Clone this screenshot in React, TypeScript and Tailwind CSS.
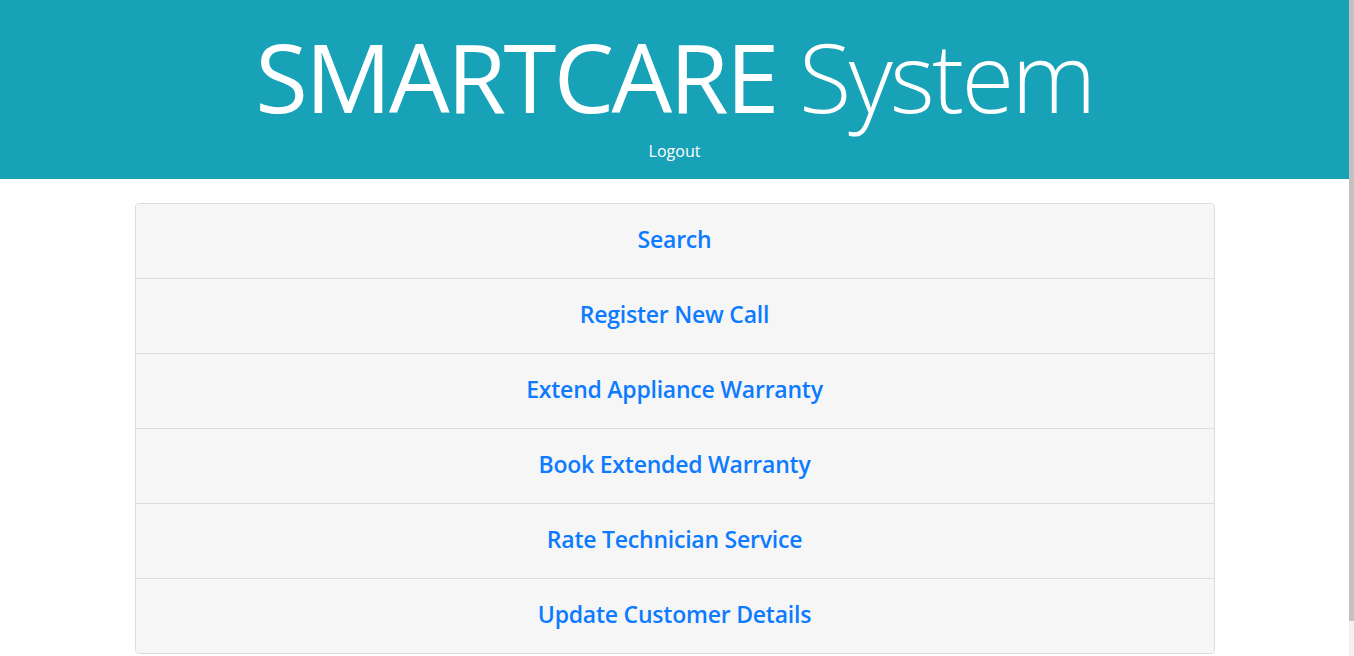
import React from "react";

const links = [
  "Search",
  "Register New Call",
  "Extend Appliance Warranty",
  "Book Extended Warranty",
  "Rate Technician Service",
  "Update Customer Details",
];

const App = () => {
  return (
    <div className="min-h-[656px] bg-white mr-[5px] font-['Open_Sans','Noto_Sans',sans-serif]">
      <header className="bg-[#17a2b8] text-white text-center pt-[18px] pb-[16px]">
        <h1 className="text-[96px] leading-[1.2] tracking-[-0.028em]">
          <span className="font-normal">SMARTCARE</span>{" "}
          <span className="font-light">System</span>
        </h1>
        <a href="#" className="block mt-[6px] text-[16px] leading-[24px] text-white">
          Logout
        </a>
      </header>

      <main className="w-[1080px] mx-auto mt-[24px]">
        <ul className="border border-[#dcdcdc] rounded-[4px] overflow-hidden">
          {links.map((label, i) => (
            <li
              key={label}
              className={
                "bg-[#f6f6f6] flex items-center justify-center pb-[4px] " +
                (i > 0 ? "h-[75px] border-t border-[#dcdcdc]" : "h-[74px]")
              }
            >
              <a href="#" className="text-[23px] font-semibold tracking-[-0.01em] text-[#0d7bff]">
                {label}
              </a>
            </li>
          ))}
        </ul>
      </main>

      {/* fake browser scrollbar */}
      <div className="fixed top-0 right-0 w-[5px] h-full bg-[#f1f1f1]">
        <div className="h-[621px] bg-[#c1c1c1]" />
      </div>
    </div>
  );
};

export default App;
